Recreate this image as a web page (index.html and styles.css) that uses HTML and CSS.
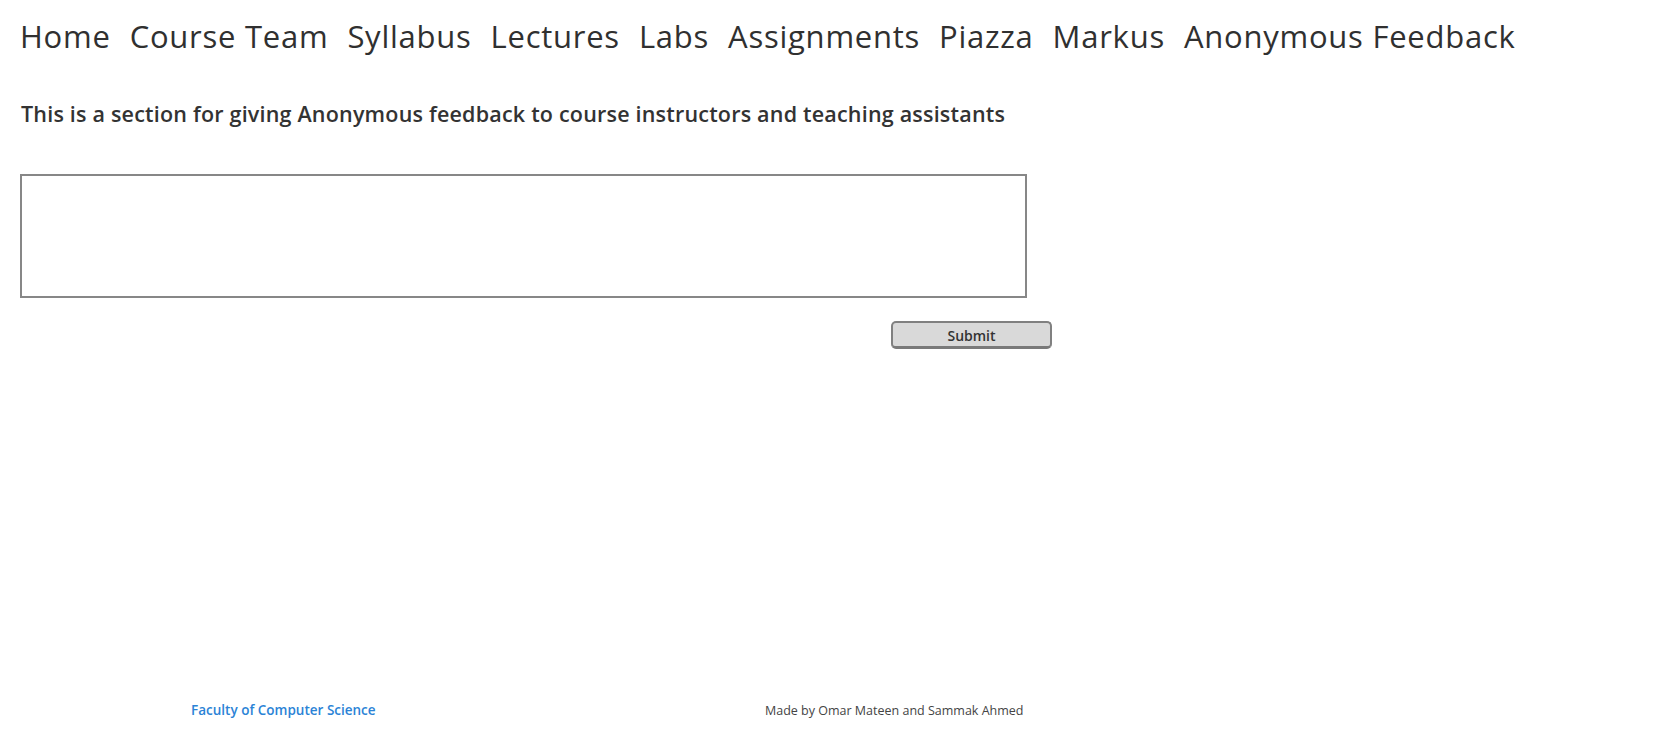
FILE: index.html
```html
<!DOCTYPE html>
<html>
<head>
<meta charset="utf-8">
<link rel="stylesheet" href="styles.css">
</head>
<body>
<nav class="nav">
  <a class="nav-link" href="#">Home</a>
  <a class="nav-link" href="#">Course Team</a>
  <a class="nav-link" href="#">Syllabus</a>
  <a class="nav-link" href="#">Lectures</a>
  <a class="nav-link" href="#">Labs</a>
  <a class="nav-link" href="#">Assignments</a>
  <a class="nav-link" href="#">Piazza</a>
  <a class="nav-link" href="#">Markus</a>
  <a class="nav-link" href="#">Anonymous Feedback</a>
</nav>
<main class="content">
  <h2 class="intro">This is a section for giving Anonymous feedback to course instructors and teaching assistants</h2>
  <form class="feedback-form">
    <textarea class="feedback-box"></textarea>
    <div class="actions">
      <button class="submit" type="button">Submit</button>
    </div>
  </form>
</main>
<footer class="footer">
  <a class="faculty" href="#">Faculty of Computer Science</a>
  <span class="credits">Made by Omar Mateen and Sammak Ahmed</span>
</footer>
</body>
</html>
```
FILE: styles.css
```css
html, body {
  margin: 0;
  padding: 0;
  background: #fff;
}
body {
  font-family: "Open Sans", Lato, sans-serif;
  color: #333;
  height: 739px;
  display: flex;
  flex-direction: column;
}
.nav {
  display: flex;
  gap: 19px;
  padding: 14px 0 0 20px;
}
.nav-link {
  font-size: 31px;
  letter-spacing: 0.75px;
  color: #303030;
  text-decoration: none;
  line-height: 44px;
}
.content {
  padding: 0 0 0 20px;
}
.intro {
  margin: 41px 0 0 1px;
  font-size: 21.5px;
  letter-spacing: 0.2px;
  font-weight: 600;
  line-height: 30px;
  color: #333;
}
.feedback-form {
  margin-top: 45px;
}
.feedback-box {
  display: block;
  box-sizing: border-box;
  width: 1007px;
  height: 124px;
  border: 2px solid #878787;
  margin: 0;
  padding: 4px;
  resize: none;
  background: #fff;
}
.actions {
  margin-top: 23px;
  padding-left: 871px;
}
.submit {
  box-sizing: border-box;
  width: 161px;
  height: 28px;
  background: #d9d9d9;
  border: 2px solid #808080;
  border-bottom: 3px solid #7a7a7a;
  border-radius: 5px;
  font-family: inherit;
  font-weight: 600;
  font-size: 14px;
  color: #333;
  padding: 2px 0 0;
}
.footer {
  margin-top: auto;
  display: grid;
  grid-template-columns: 574px auto;
  align-items: baseline;
  padding: 0 0 20px 191px;
}
.faculty {
  font-size: 13.5px;
  color: #2b83d6;
  font-weight: 600;
  text-decoration: none;
}
.credits {
  font-size: 12.5px;
  color: #444;
}
```
